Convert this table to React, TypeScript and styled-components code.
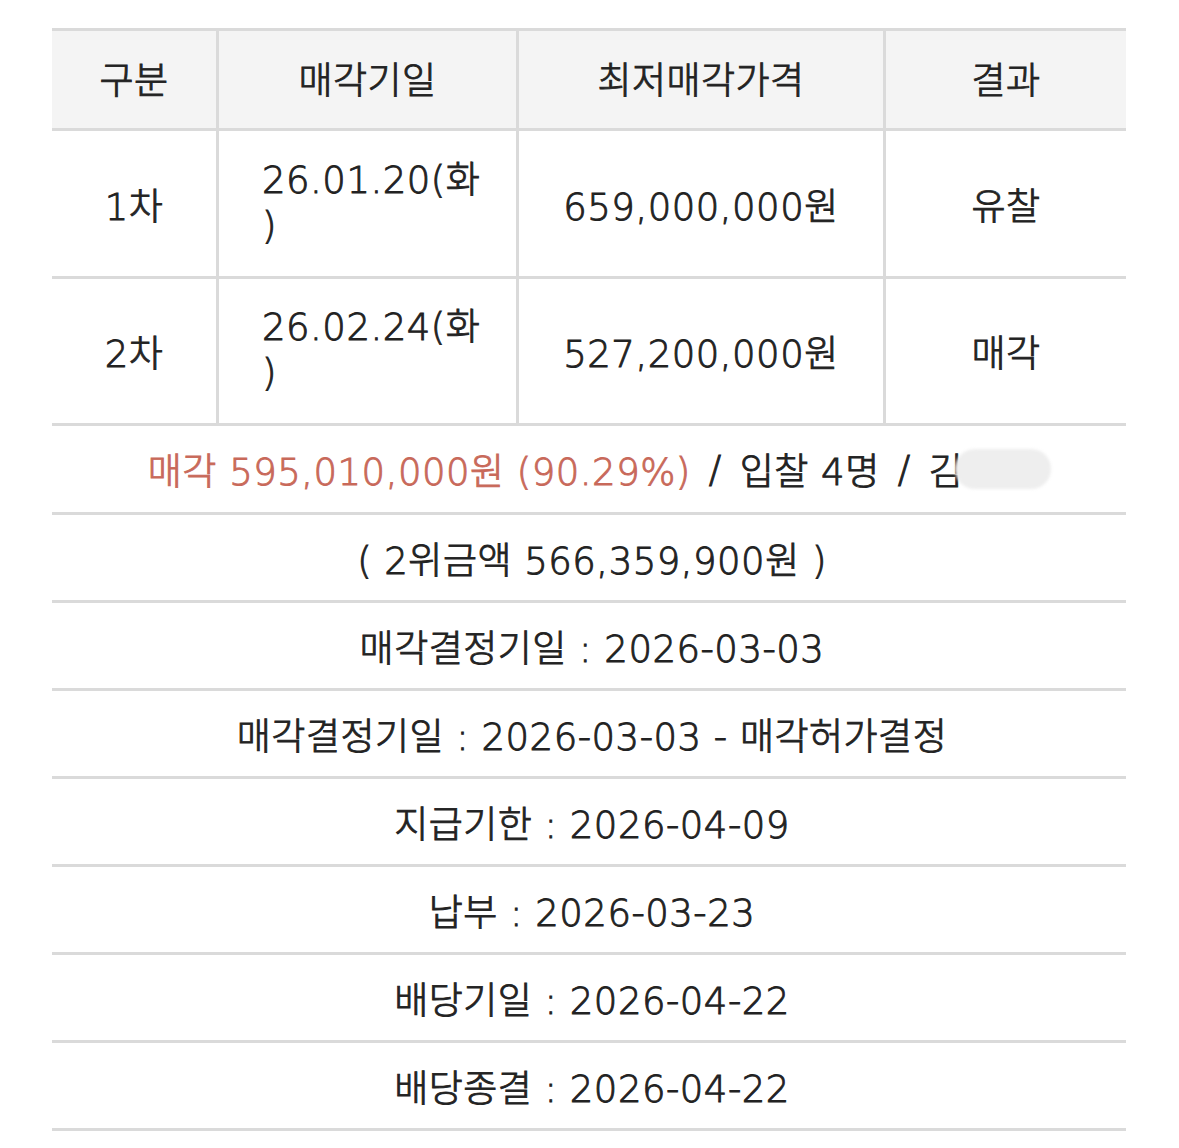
import React from "react";
import styled, { createGlobalStyle } from "styled-components";

const GlobalStyle = createGlobalStyle`
  html, body {
    margin: 0;
    padding: 0;
    background: #ffffff;
  }
  body {
    font-family: "DejaVu Sans", "Noto Sans CJK KR", sans-serif;
    color: #222222;
  }
`;

const LINE = "#dadada";

const Page = styled.div`
  padding: 28px 0 0 52px;
  width: 1074px;
`;

const Grid = styled.div`
  display: grid;
  grid-template-columns: 167px 300px 367px 240px;
  border-top: 3px solid ${LINE};
  font-size: 37px;
  letter-spacing: 0.5px;
  font-weight: 300;
  -webkit-text-stroke: 0.9px currentColor;
`;

const Cell = styled.div<{ $h: number; $last?: boolean; $left?: boolean; $head?: boolean }>`
  box-sizing: border-box;
  height: ${(p) => p.$h}px;
  display: flex;
  align-items: center;
  justify-content: ${(p) => (p.$left ? "flex-start" : "center")};
  padding-left: ${(p) => (p.$left ? "43px" : "0")};
  padding-bottom: ${(p) => (p.$head ? "3px" : "0")};
  background: ${(p) => (p.$head ? "#f4f4f4" : "#ffffff")};
  border-bottom: 3px solid ${LINE};
  border-right: ${(p) => (p.$last ? "none" : `3px solid ${LINE}`)};
  white-space: nowrap;
`;

const DateText = styled.div`
  line-height: 46px;
  text-align: left;
`;

const InfoRow = styled.div<{ $h: number; $shift?: number }>`
  box-sizing: border-box;
  height: ${(p) => p.$h}px;
  display: flex;
  align-items: center;
  justify-content: center;
  padding-left: ${(p) => p.$shift ?? 6}px;
  border-bottom: 3px solid ${LINE};
  font-size: 37px;
  font-weight: 300;
  letter-spacing: 0.5px;
  -webkit-text-stroke: 0.9px currentColor;
  white-space: nowrap;
`;

const Red = styled.span`
  color: #c8695a;
`;

const Sep = styled.span`
  margin: 0 18px;
`;

const Name = styled.span`
  display: inline-flex;
  align-items: center;
`;

const Mask = styled.span`
  display: inline-block;
  width: 96px;
  height: 40px;
  margin-left: -8px;
  border-radius: 20px;
  background: #eeeeee;
  filter: blur(1.5px);
`;

const rounds = [
  { no: "1차", date: "26.01.20(화", price: "659,000,000원", result: "유찰", h: 148 },
  { no: "2차", date: "26.02.24(화", price: "527,200,000원", result: "매각", h: 147 },
];

const infos = [
  "( 2위금액 566,359,900원 )",
  "매각결정기일 : 2026-03-03",
  "매각결정기일 : 2026-03-03 - 매각허가결정",
  "지급기한 : 2026-04-09",
  "납부 : 2026-03-23",
  "배당기일 : 2026-04-22",
  "배당종결 : 2026-04-22",
];

export default function App() {
  return (
    <>
      <GlobalStyle />
      <Page>
        <Grid>
          <Cell $h={100} $head>구분</Cell>
          <Cell $h={100} $head>매각기일</Cell>
          <Cell $h={100} $head>최저매각가격</Cell>
          <Cell $h={100} $head $last>결과</Cell>
          {rounds.map((r) => (
            <React.Fragment key={r.no}>
              <Cell $h={r.h}>{r.no}</Cell>
              <Cell $h={r.h} $left>
                <DateText>
                  {r.date}
                  <br />)
                </DateText>
              </Cell>
              <Cell $h={r.h}>{r.price}</Cell>
              <Cell $h={r.h} $last>{r.result}</Cell>
            </React.Fragment>
          ))}
        </Grid>
        <InfoRow $h={89} $shift={21}>
          <Red>매각 595,010,000원 (90.29%)</Red>
          <Sep>/</Sep>
          입찰 4명
          <Sep>/</Sep>
          <Name>
            김<Mask />
          </Name>
        </InfoRow>
        {infos.map((t, i) => (
          <InfoRow key={i} $h={88}>
            {t}
          </InfoRow>
        ))}
      </Page>
    </>
  );
}
